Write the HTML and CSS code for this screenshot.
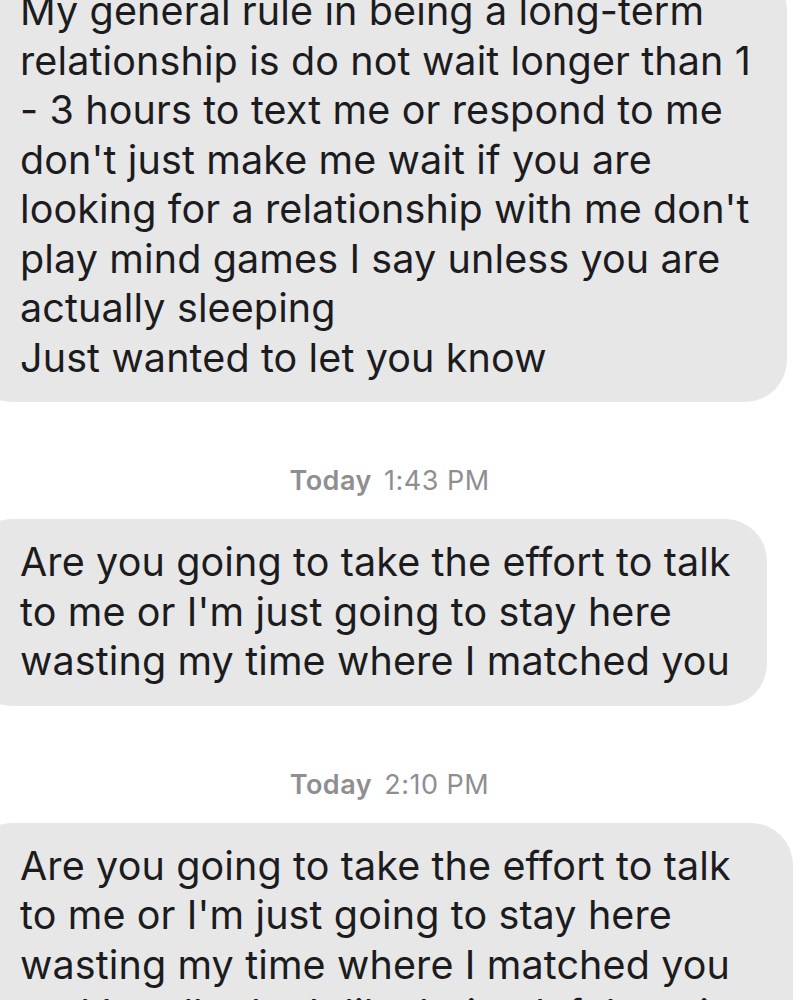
FILE: index.html
```html
<!DOCTYPE html>
<html lang="en">
<head>
  <meta charset="UTF-8">
  <meta name="viewport" content="width=device-width, initial-scale=1.0">
  <title>Messages</title>
  <link rel="stylesheet" href="styles.css">
</head>
<body>
  <!-- Conversation thread -->
  <main class="thread">
    <div class="bubble">
      My general rule in being a long-term<br>
      relationship is do not wait longer than 1<br>
      - 3 hours to text me or respond to me<br>
      don't just make me wait if you are<br>
      looking for a relationship with me don't<br>
      play mind games I say unless you are<br>
      actually sleeping<br>
      Just wanted to let you know
    </div>

    <div class="stamp"><b>Today</b> 1:43 PM</div>

    <div class="bubble">
      Are you going to take the effort to talk<br>
      to me or I'm just going to stay here<br>
      wasting my time where I matched you
    </div>

    <div class="stamp"><b>Today</b> 2:10 PM</div>

    <div class="bubble">
      Are you going to take the effort to talk<br>
      to me or I'm just going to stay here<br>
      wasting my time where I matched you<br>
      and I really don't like being left hanging
    </div>
  </main>
</body>
</html>
```

FILE: styles.css
```css
html,
body {
  margin: 0;
  padding: 0;
  background-color: #fff;
  height: 1000px;
  overflow: hidden;
}
body {
  font-family: Inter, "Noto Sans", sans-serif;
  color: #1c1c1e;
}

/* Thread column */
.thread {
  display: flex;
  flex-direction: column;
  align-items: flex-start;
  margin-top: -32px;
}

/* Incoming message bubble */
.bubble {
  background-color: #e7e7e8;
  font-size: 39.5px;
  letter-spacing: 0.12px;
  line-height: 49.5px;
  padding: 19px 36px 19px 50px;
  margin-left: -30px;
  border-radius: 42px;
  white-space: nowrap;
}

/* Date / time divider */
.stamp {
  align-self: stretch;
  text-align: center;
  color: #8e8e93;
  font-size: 27px;
  letter-spacing: 0.5px;
  line-height: 30px;
  margin: 64px 0 23px;
  padding-right: 21px;
}
.stamp b {
  font-weight: 600;
  margin-right: 4px;
}
```
